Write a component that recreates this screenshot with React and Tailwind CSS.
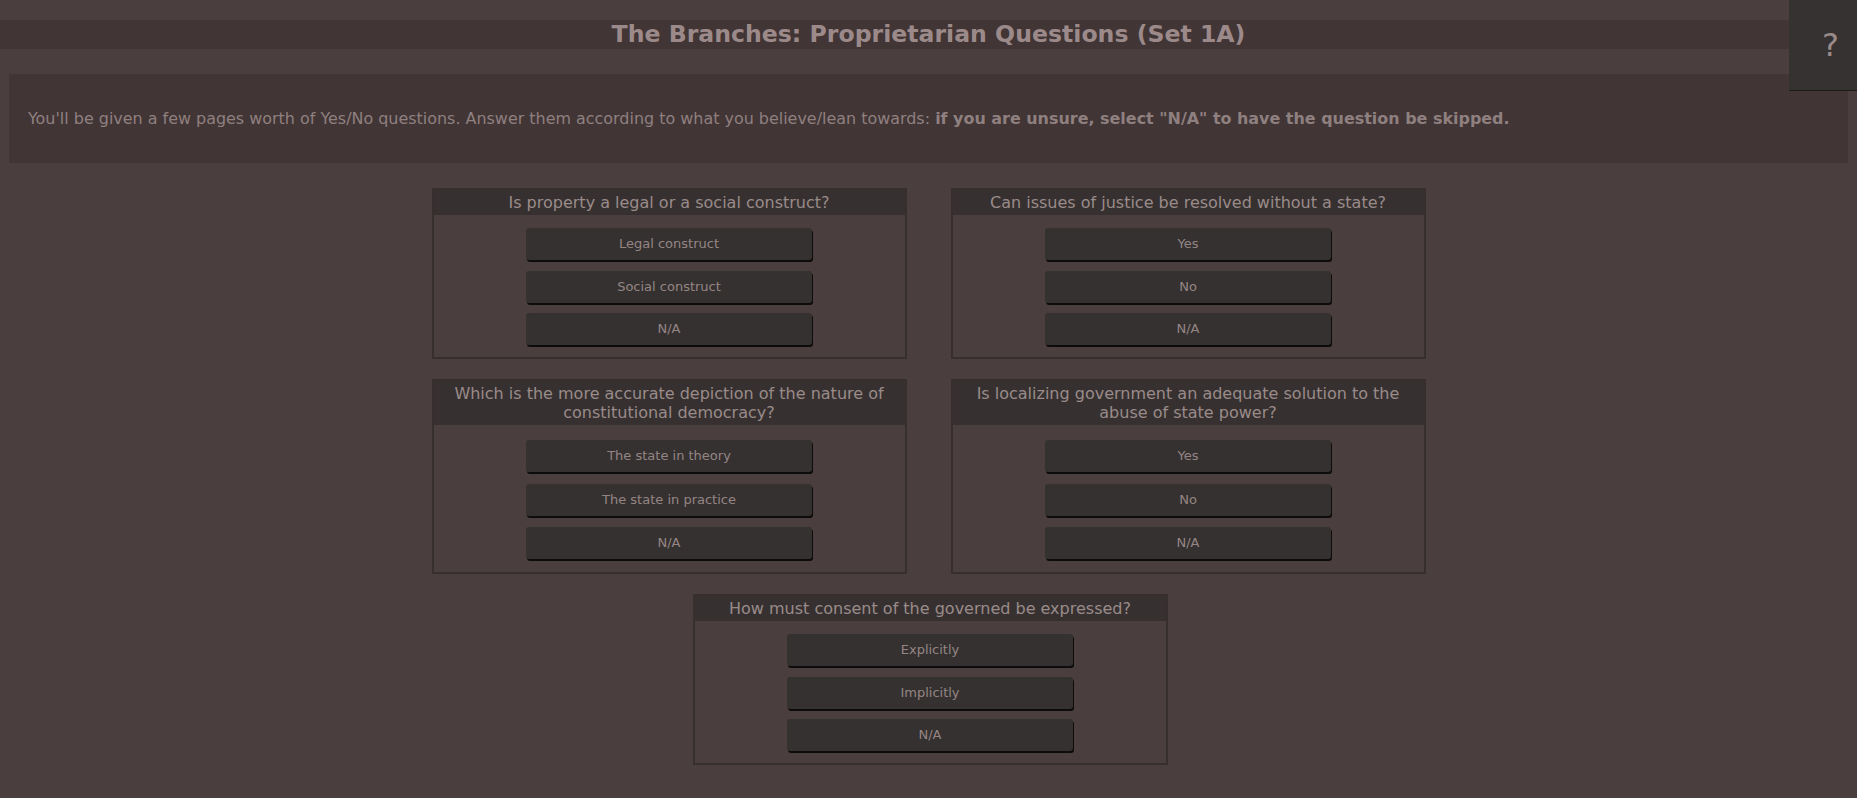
import React from 'react';

const questions = [
  { q: 'Is property a legal or a social construct?', a: ['Legal construct', 'Social construct', 'N/A'] },
  { q: 'Can issues of justice be resolved without a state?', a: ['Yes', 'No', 'N/A'] },
  { q: 'Which is the more accurate depiction of the nature of constitutional democracy?', a: ['The state in theory', 'The state in practice', 'N/A'], tall: true },
  { q: 'Is localizing government an adequate solution to the abuse of state power?', a: ['Yes', 'No', 'N/A'], tall: true },
  { q: 'How must consent of the governed be expressed?', a: ['Explicitly', 'Implicitly', 'N/A'], last: true },
];

function QuestionCard({ q, a, tall, last }) {
  return (
    <div
      className={
        'w-[475px] border-2 border-[#372f2e] bg-[#4b3e3e] ' +
        (tall ? 'pb-[13px] ' : 'pb-[12px] ') +
        (last ? 'ml-[3px]' : '')
      }
    >
      <div className="bg-[#363130] px-[14px] py-[3px] text-center text-[16px] leading-[19px] text-[#9a8b8a]">
        {q}
      </div>
      <div
        className={
          'flex flex-col items-center ' +
          (tall ? 'mt-[15px] gap-[11.5px]' : 'mt-[13px] gap-[10.5px]')
        }
      >
        {a.map((label) => (
          <button
            key={label}
            className="h-[32px] w-[286px] rounded-[3px] bg-[#353130] text-[13px] text-[#948584] shadow-[1px_2px_0_#0d0b0b]"
          >
            {label}
          </button>
        ))}
      </div>
    </div>
  );
}

export default function App() {
  return (
    <div
      className="relative min-h-[798px] bg-[#4b3e3e] pt-[20px] text-[#9a8b8a]"
      style={{ fontFamily: '"DejaVu Sans", Verdana, sans-serif' }}
    >
      {/* title */}
      <div className="flex h-[29px] items-center justify-center bg-[#413535]">
        <h1 className="text-[23.6px] font-bold leading-none text-[#9c8a8a]">
          The Branches: Proprietarian Questions (Set 1A)
        </h1>
      </div>

      {/* help button */}
      <div className="absolute right-0 top-0 flex h-[90px] w-[68px] items-center justify-center bg-[#363231] pl-[15px] text-[32px] text-[#9a8b8a] shadow-[0_1px_0_#1f1a1a]">
        ?
      </div>

      {/* intro */}
      <div className="mx-[9px] mt-[25px] flex h-[89px] items-center bg-[#413535] px-[19px] text-[15.95px] text-[#8f8080]">
        <p>
          You'll be given a few pages worth of Yes/No questions. Answer them according to what you believe/lean towards:{' '}
          <b className="font-bold">if you are unsure, select "N/A" to have the question be skipped.</b>
        </p>
      </div>

      {/* questions */}
      <div className="mx-auto mt-[25px] flex w-[1000px] flex-wrap justify-center gap-x-[44px] gap-y-[20px]">
        {questions.map((item) => (
          <QuestionCard key={item.q} {...item} />
        ))}
      </div>
    </div>
  );
}
